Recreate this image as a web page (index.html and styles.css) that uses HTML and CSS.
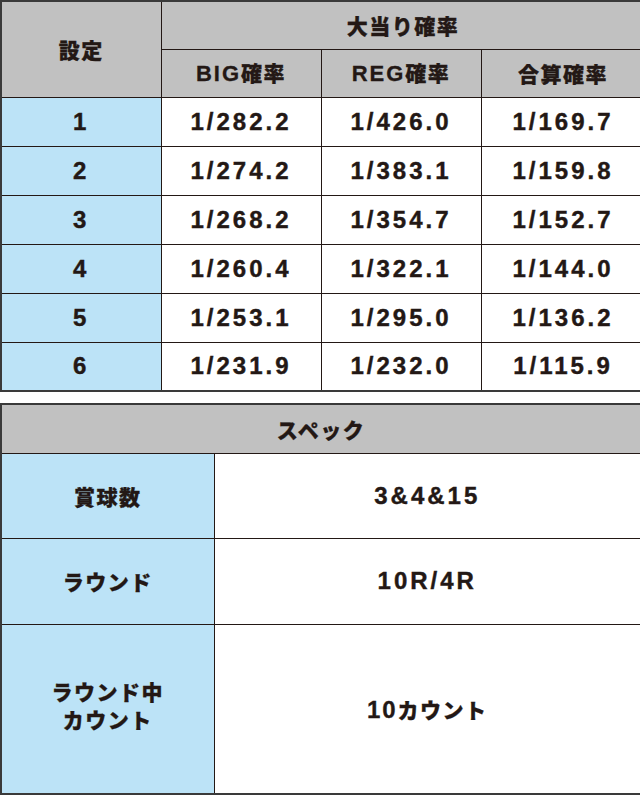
FILE: index.html
```html
<!DOCTYPE html>
<html lang="ja">
<head>
<meta charset="utf-8">
<link rel="stylesheet" href="styles.css">
</head>
<body>
<div class="page">
<table class="t1">
  <colgroup><col class="c1"><col class="c2"><col class="c3"><col class="c4"></colgroup>
  <tr class="hr">
    <th class="head jp" rowspan="2">設定</th>
    <th class="head jp" colspan="3">大当り確率</th>
  </tr>
  <tr class="hr">
    <th class="head jp"><span class="lat">BIG</span>確率</th>
    <th class="head jp"><span class="lat">REG</span>確率</th>
    <th class="head jp">合算確率</th>
  </tr>
  <tr class="dr"><td class="lab num">1</td><td class="num">1/282.2</td><td class="num">1/426.0</td><td class="num">1/169.7</td></tr>
  <tr class="dr"><td class="lab num">2</td><td class="num">1/274.2</td><td class="num">1/383.1</td><td class="num">1/159.8</td></tr>
  <tr class="dr"><td class="lab num">3</td><td class="num">1/268.2</td><td class="num">1/354.7</td><td class="num">1/152.7</td></tr>
  <tr class="dr"><td class="lab num">4</td><td class="num">1/260.4</td><td class="num">1/322.1</td><td class="num">1/144.0</td></tr>
  <tr class="dr"><td class="lab num">5</td><td class="num">1/253.1</td><td class="num">1/295.0</td><td class="num">1/136.2</td></tr>
  <tr class="dr last"><td class="lab num">6</td><td class="num">1/231.9</td><td class="num">1/232.0</td><td class="num">1/115.9</td></tr>
</table>

<table class="t2">
  <colgroup><col class="k1"><col class="k2"></colgroup>
  <tr class="sh"><th class="head jp" colspan="2">スペック</th></tr>
  <tr class="r1"><td class="lab jp">賞球数</td><td class="num">3&amp;4&amp;15</td></tr>
  <tr class="r2"><td class="lab jp">ラウンド</td><td class="num">10R/4R</td></tr>
  <tr class="r3"><td class="lab jp tall">ラウンド中<br>カウント</td><td class="mix"><span class="lat2">10</span>カウント</td></tr>
</table>
</div>
</body>
</html>
```
FILE: styles.css
```css
html, body {
  margin: 0;
  padding: 0;
  background: #ffffff;
  overflow: hidden;
}
.page {
  width: 640px;
  height: 795px;
  overflow: hidden;
}
table {
  border-collapse: collapse;
  table-layout: fixed;
  color: #231815;
}
th, td {
  padding: 0;
  text-align: center;
  vertical-align: middle;
  border: 1px solid #231815;
}
.t1 {
  width: 644px;
  border-left: 2px solid #3a3a3a;
  border-top: 2px solid #3a3a3a;
  border-bottom: 2px solid #3a3a3a;
}
.c1, .c2, .c3 { width: 160px; }
.c4 { width: 164px; }
.t1 .hr { height: 48px; }
.t1 .dr { height: 49px; }
.head {
  background: #c1c1c1;
}
.lab { background: #bce3f7; }
.jp {
  font-family: "Noto Sans CJK JP", sans-serif;
  font-weight: 900;
  font-size: 21px;
  letter-spacing: 1.5px;
  line-height: 28px;
  -webkit-text-stroke: 0.3px #231815;
}
.lat {
  font-family: "Liberation Sans", Arial, sans-serif;
  font-weight: 700;
  font-size: 22px;
  letter-spacing: 2px;
}
.num {
  font-family: "Liberation Sans", Arial, sans-serif;
  font-weight: 700;
  font-size: 24px;
  letter-spacing: 3px;
  -webkit-text-stroke: 0.4px #231815;
}
.t2 {
  width: 640px;
  margin-top: 11px;
  border: 2px solid #3a3a3a;
}
.k1 { width: 213px; }
.k2 { width: 427px; }
.t2 .sh { height: 49px; }
.t2 .r1 { height: 85px; }
.t2 .r2 { height: 86px; }
.t2 .r3 { height: 170px; }
.tall { padding-bottom: 8px; }
.mix {
  font-family: "Noto Sans CJK JP", sans-serif;
  font-weight: 900;
  font-size: 21px;
  letter-spacing: 1.5px;
  -webkit-text-stroke: 0.3px #231815;
}
.lat2 {
  font-family: "Liberation Sans", Arial, sans-serif;
  font-weight: 700;
  font-size: 24px;
  letter-spacing: 2px;
}
```
